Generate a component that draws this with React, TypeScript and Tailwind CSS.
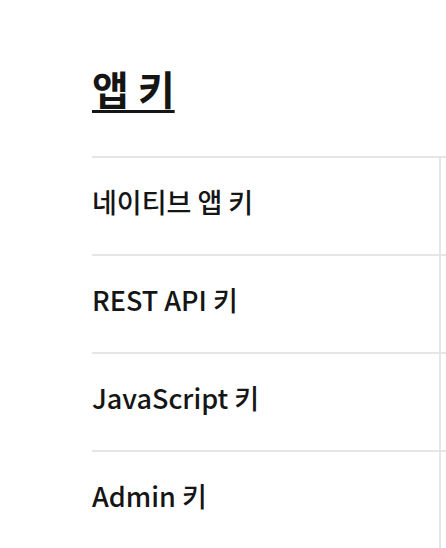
import React from "react";

const rows = ["네이티브 앱 키", "REST API 키", "JavaScript 키", "Admin 키"];

export default function App() {
  return (
    <div
      className="w-[446px] h-[548px] overflow-hidden bg-white text-[#151515]"
      style={{ fontFamily: '"Noto Sans CJK KR", "Noto Sans", sans-serif' }}
    >
      <div className="pl-[92px] pt-[60px]">
        <h1 className="text-[40px] font-bold leading-[56px] underline decoration-[3px] underline-offset-[5px]">
          앱 키
        </h1>
        <div className="mt-[40px] w-[600px] border-t-2 border-[#e6e6e6]">
          {rows.map((r) => (
            <div key={r} className="flex h-[98px] border-b-2 border-[#e6e6e6]">
              <div className="w-[349px] flex items-center pb-[8px] border-r-2 border-[#e6e6e6] text-[27px] font-medium">
                {r}
              </div>
              <div className="flex-1" />
            </div>
          ))}
        </div>
      </div>
    </div>
  );
}
